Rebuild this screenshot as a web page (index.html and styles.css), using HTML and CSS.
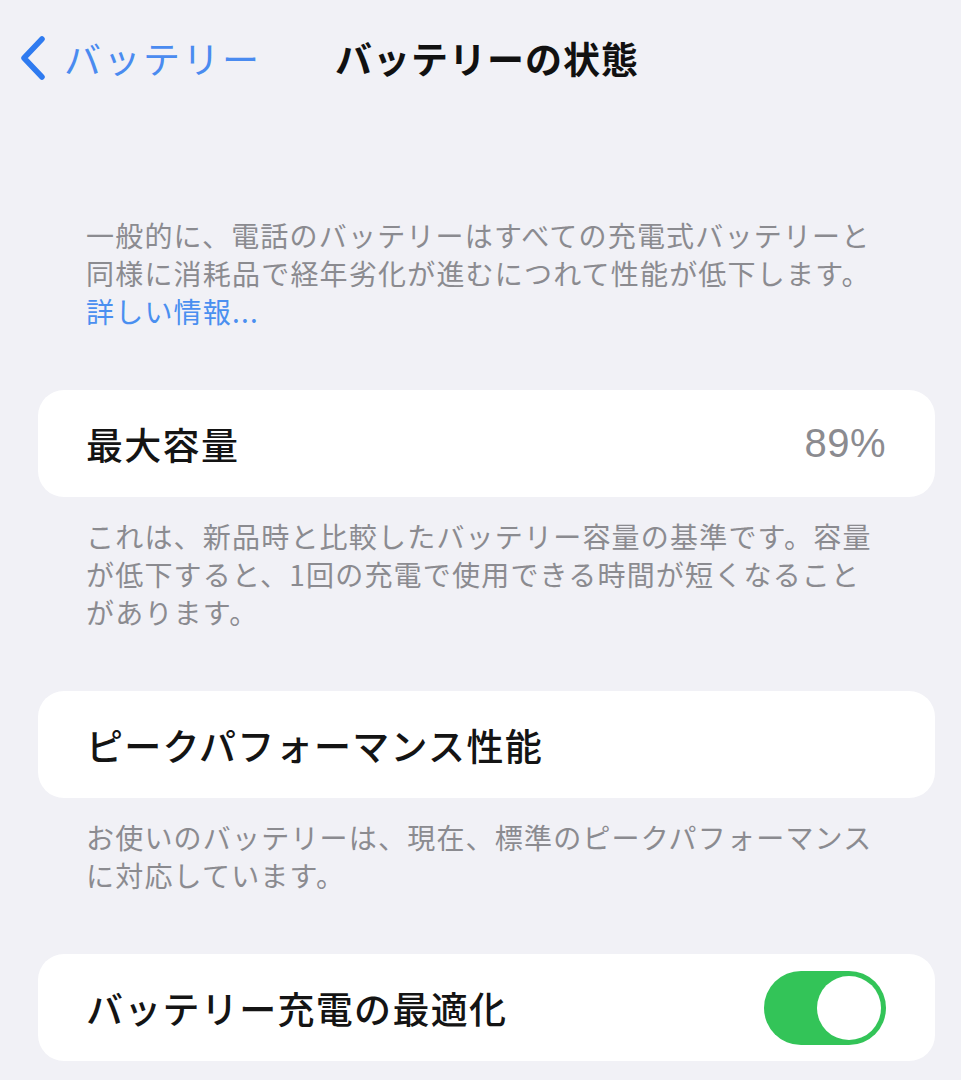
FILE: index.html
```html
<!DOCTYPE html>
<html lang="ja">
<head>
<meta charset="utf-8">
<link rel="stylesheet" href="styles.css">
</head>
<body>
<div class="page">
  <header class="nav">
    <div class="back">
      <svg class="chev" width="30" height="44" viewBox="0 0 30 44"><path d="M24 3 L6 22 L24 41" fill="none" stroke="#2f7bf0" stroke-width="5.5" stroke-linecap="round" stroke-linejoin="round"/></svg>
      <span class="back-label">バッテリー</span>
    </div>
    <div class="title">バッテリーの状態</div>
  </header>

  <p class="foot intro">一般的に、電話のバッテリーはすべての充電式バッテリーと<br>同様に消耗品で経年劣化が進むにつれて性能が低下します。<br><span class="link">詳しい情報...</span></p>

  <div class="card">
    <span class="label">最大容量</span>
    <span class="value">89%</span>
  </div>
  <p class="foot">これは、新品時と比較したバッテリー容量の基準です。容量<br>が低下すると、1回の充電で使用できる時間が短くなること<br>があります。</p>

  <div class="card">
    <span class="label">ピークパフォーマンス性能</span>
  </div>
  <p class="foot">お使いのバッテリーは、現在、標準のピークパフォーマンス<br>に対応しています。</p>

  <div class="card">
    <span class="label">バッテリー充電の最適化</span>
    <span class="toggle"><span class="knob"></span></span>
  </div>
</div>
</body>
</html>
```

FILE: styles.css
```css
html, body {
  margin: 0;
  padding: 0;
  background: #f1f1f6;
}
.page {
  width: 961px;
  height: 1080px;
  overflow: hidden;
  font-family: "Noto Sans CJK JP", "Noto Sans", sans-serif;
  background: #f1f1f6;
}
.nav {
  height: 116px;
  display: flex;
  align-items: flex-start;
  padding-left: 18px;
  padding-top: 34px;
  box-sizing: border-box;
}
.back {
  display: flex;
  align-items: center;
  gap: 16px;
  width: 317px;
}
.chev {
  display: block;
}
.back-label {
  font-size: 37px;
  line-height: 48px;
  color: #4a8bf0;
  letter-spacing: 2.5px;
}
.title {
  font-size: 37px;
  line-height: 48px;
  font-weight: 700;
  color: #111;
  letter-spacing: 1px;
}
.foot {
  margin: 0;
  padding: 0 20px 0 86px;
  font-size: 28px;
  line-height: 38px;
  color: #8b8b90;
  letter-spacing: 1.2px;
}
.intro {
  margin-top: 100px;
}
.link {
  color: #4a8ff0;
}
.card {
  margin: 62px 26px 20px 38px;
  height: 107px;
  background: #fff;
  border-radius: 26px;
  display: flex;
  align-items: center;
  justify-content: space-between;
  padding: 0 49px 0 48px;
  box-sizing: border-box;
}
.foot + .card {
  margin-top: 60px;
}
.label {
  font-size: 37px;
  font-weight: 500;
  color: #141414;
  letter-spacing: 1.3px;
}
.value {
  font-family: "Liberation Sans", "Noto Sans", sans-serif;
  font-size: 40px;
  color: #8b8b90;
  letter-spacing: 0.5px;
}
.toggle {
  width: 122px;
  height: 74px;
  border-radius: 37px;
  background: #33c458;
  display: flex;
  align-items: center;
  justify-content: flex-end;
  padding: 0 5px;
  box-sizing: border-box;
}
.knob {
  width: 64px;
  height: 64px;
  border-radius: 50%;
  background: #fff;
}
```
